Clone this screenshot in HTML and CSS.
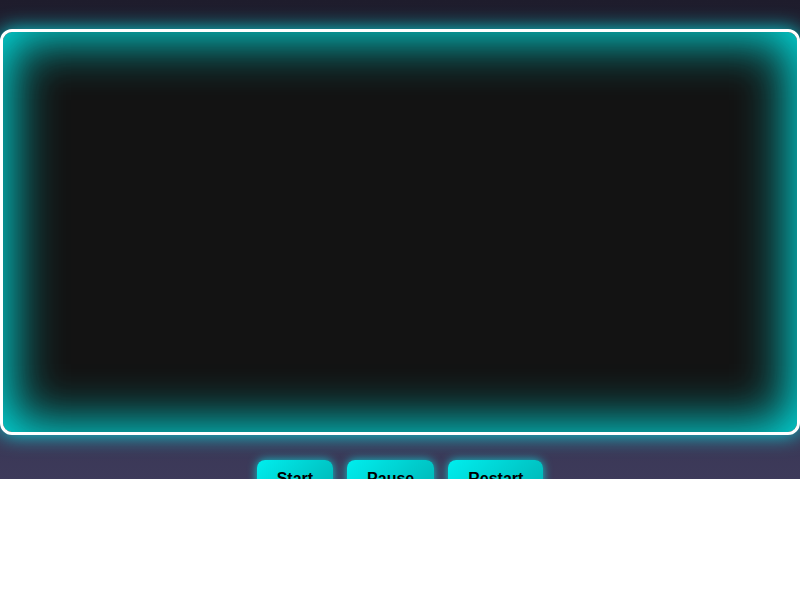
FILE: index.html
```html
<!DOCTYPE html>
<html lang="en">
<head>
<meta charset="utf-8">
<title>Game</title>
<link rel="stylesheet" href="styles.css">
</head>
<body>
<div class="stage">
  <div class="board"></div>
  <div class="controls">
    <button class="btn">Start</button>
    <button class="btn">Pause</button>
    <button class="btn">Restart</button>
  </div>
</div>
</body>
</html>
```
FILE: styles.css
```css
html, body {
  margin: 0;
  padding: 0;
  background: #ffffff;
}

.stage {
  height: 479px;
  overflow: hidden;
  background: linear-gradient(180deg, #1e1c2c 0%, #3d3a5a 100%);
  padding-top: 29px;
  box-sizing: border-box;
  font-family: "Liberation Sans", Arial, sans-serif;
}

/* play field with neon rim */
.board {
  height: 400px;
  border: 3px solid #ffffff;
  border-radius: 12px;
  background: #131313;
  box-shadow: 0 0 20px rgba(0, 255, 255, 0.8), inset 0 0 50px 8px #00e0e0;
}

.controls {
  display: flex;
  justify-content: center;
  gap: 14px;
  margin-top: 25px;
}

.btn {
  font-family: "Liberation Sans", Arial, sans-serif;
  font-size: 16px;
  font-weight: bold;
  color: #000000;
  padding: 10px 20px;
  border: none;
  border-radius: 8px;
  background: linear-gradient(135deg, #00eeee 0%, #00b4b4 100%);
  box-shadow: 0 0 10px rgba(0, 255, 255, 0.7);
}
```
